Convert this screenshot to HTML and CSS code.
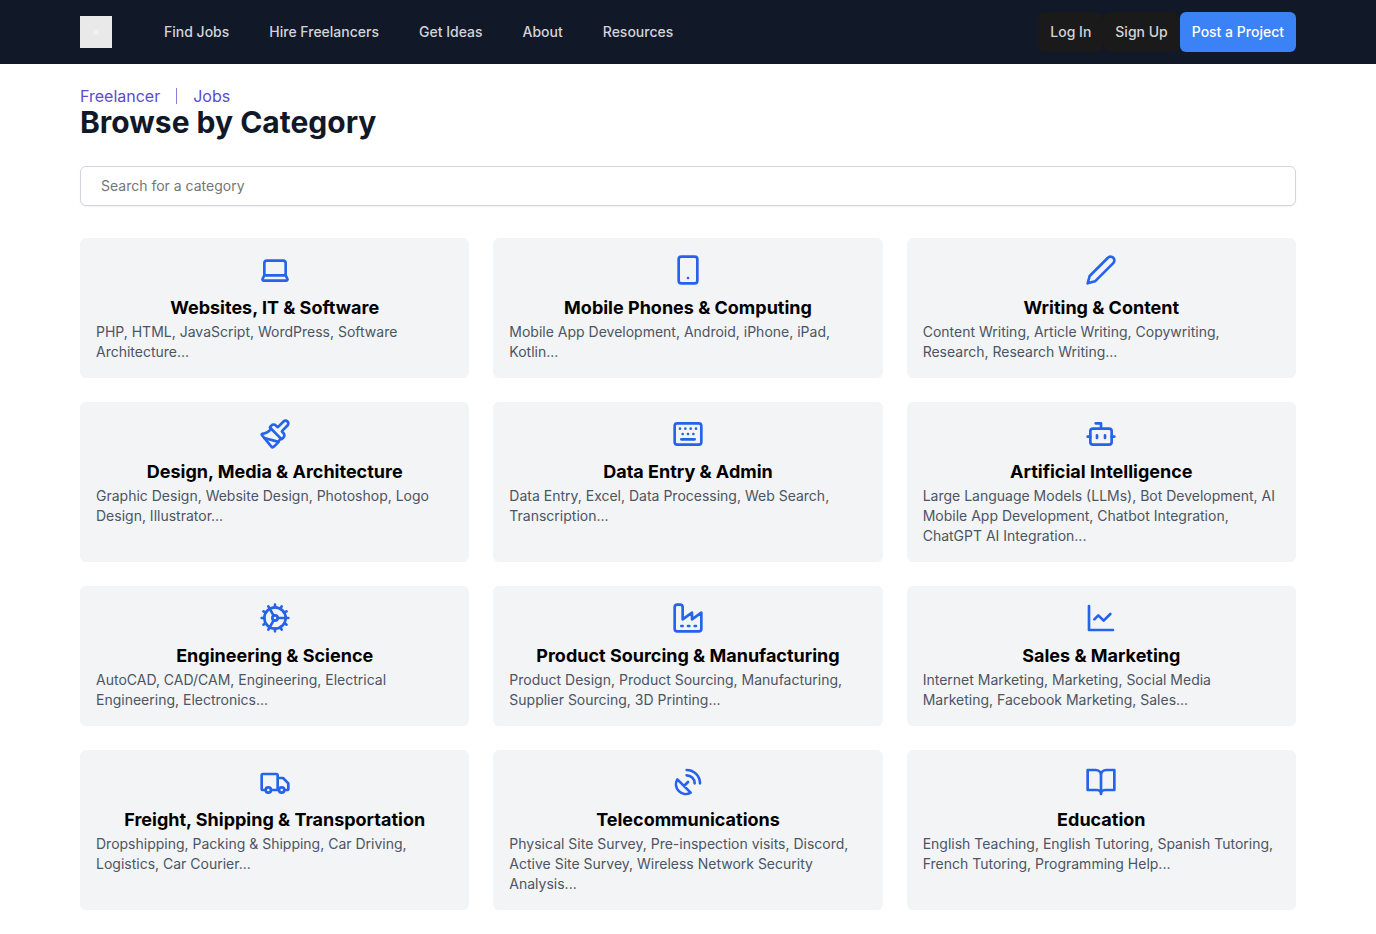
FILE: index.html
```html
<!DOCTYPE html>
<html lang="en">
<head>
<meta charset="utf-8">
<meta name="viewport" content="width=device-width, initial-scale=1">
<title>Browse by Category</title>
<link rel="stylesheet" href="styles.css">
</head>
<body>
<header class="site-header">
  <div class="container header-row">
    <a class="logo" href="#" aria-label="Home"><svg viewBox="0 0 32 32" aria-hidden="true"><rect width="32" height="32" fill="#e9e9ea"/><circle cx="16" cy="16" r="2.5" fill="#f1f1f2"/></svg></a>
    <nav class="main-nav" aria-label="Main">
      <a href="#">Find Jobs</a>
      <a href="#">Hire Freelancers</a>
      <a href="#">Get Ideas</a>
      <a href="#">About</a>
      <a href="#">Resources</a>
    </nav>
    <div class="actions">
      <button class="btn" type="button">Log In</button>
      <button class="btn" type="button">Sign Up</button>
      <button class="btn btn-primary" type="button">Post a Project</button>
    </div>
  </div>
</header>
<main class="container page">
  <nav class="breadcrumb" aria-label="Breadcrumb">
    <a href="#">Freelancer</a>
    <span class="separator"></span>
    <a href="#">Jobs</a>
  </nav>
  <h1 class="title">Browse by Category</h1>
  <input class="search" type="text" placeholder="Search for a category" aria-label="Search for a category">
  <div class="grid">
    <article class="card">
      <svg class="icon" viewBox="0 0 24 24" aria-hidden="true"><path d="M20 16V7a2 2 0 0 0-2-2H6a2 2 0 0 0-2 2v9m16 0H4m16 0 1.28 2.55a1 1 0 0 1-.9 1.45H3.62a1 1 0 0 1-.9-1.45L4 16"/></svg>
      <h2>Websites, IT &amp; Software</h2>
      <p>PHP, HTML, JavaScript, WordPress, Software Architecture...</p>
    </article>
    <article class="card">
      <svg class="icon" viewBox="0 0 24 24" aria-hidden="true"><rect width="14" height="20" x="5" y="2" rx="2"/><path d="M12 18h.01"/></svg>
      <h2>Mobile Phones &amp; Computing</h2>
      <p>Mobile App Development, Android, iPhone, iPad, Kotlin...</p>
    </article>
    <article class="card">
      <svg class="icon" viewBox="0 0 24 24" aria-hidden="true"><path d="M17 3a2.85 2.83 0 1 1 4 4L7.500 20.500 2 22l1.500-5.500Z"/></svg>
      <h2>Writing &amp; Content</h2>
      <p>Content Writing, Article Writing, Copywriting, Research, Research Writing...</p>
    </article>
    <article class="card">
      <svg class="icon" viewBox="0 0 24 24" aria-hidden="true"><path d="m14.622 17.897-10.680-2.913"/><path d="M18.376 2.622a1 1 0 1 1 3.002 3.002L17.360 9.643a.5.5 0 0 0 0 .707l.944.944a2.410 2.410 0 0 1 0 3.408l-.944.944a.5.5 0 0 1-.707 0L8.354 7.348a.5.5 0 0 1 0-.707l.944-.944a2.410 2.410 0 0 1 3.408 0l.944.944a.5.5 0 0 0 .707 0z"/><path d="M9 8c-1.804 2.710-3.970 3.460-6.583 3.948a.507.507 0 0 0-.302.819l7.320 8.883a1 1 0 0 0 1.185.204C12.735 20.405 16 16.792 16 15"/></svg>
      <h2>Design, Media &amp; Architecture</h2>
      <p>Graphic Design, Website Design, Photoshop, Logo Design, Illustrator...</p>
    </article>
    <article class="card">
      <svg class="icon" viewBox="0 0 24 24" aria-hidden="true"><path d="M10 8h.01M12 12h.01M14 8h.01M16 12h.01M18 8h.01M6 8h.01M7 16h10M8 12h.01"/><rect width="20" height="16" x="2" y="4" rx="2"/></svg>
      <h2>Data Entry &amp; Admin</h2>
      <p>Data Entry, Excel, Data Processing, Web Search, Transcription...</p>
    </article>
    <article class="card">
      <svg class="icon" viewBox="0 0 24 24" aria-hidden="true"><path d="M12 8V4H8"/><rect width="16" height="12" x="4" y="8" rx="2"/><path d="M2 14h2M20 14h2M15 13v2M9 13v2"/></svg>
      <h2>Artificial Intelligence</h2>
      <p>Large Language Models (LLMs), Bot Development, AI Mobile App Development, Chatbot Integration, ChatGPT AI Integration...</p>
    </article>
    <article class="card">
      <svg class="icon" viewBox="0 0 24 24" aria-hidden="true"><circle cx="12" cy="12" r="8"/><circle cx="12" cy="12" r="2"/><path d="M12 2v2M12 22v-2M17 20.660l-1-1.730M11 10.270 7 3.340M20.660 17l-1.730-1M3.340 7l1.730 1M14 12h8M2 12h2M20.660 7l-1.730 1M3.340 17l1.730-1M17 3.340l-1 1.730M11 13.730l-4 6.930"/></svg>
      <h2>Engineering &amp; Science</h2>
      <p>AutoCAD, CAD/CAM, Engineering, Electrical Engineering, Electronics...</p>
    </article>
    <article class="card">
      <svg class="icon" viewBox="0 0 24 24" aria-hidden="true"><path d="M2 20a2 2 0 0 0 2 2h16a2 2 0 0 0 2-2V8l-7 5V8l-7 5V4a2 2 0 0 0-2-2H4a2 2 0 0 0-2 2ZM17 18h1M12 18h1M7 18h1"/></svg>
      <h2>Product Sourcing &amp; Manufacturing</h2>
      <p>Product Design, Product Sourcing, Manufacturing, Supplier Sourcing, 3D Printing...</p>
    </article>
    <article class="card">
      <svg class="icon" viewBox="0 0 24 24" aria-hidden="true"><path d="M3 3v18h18M19 9l-5 5-4-4-3 3"/></svg>
      <h2>Sales &amp; Marketing</h2>
      <p>Internet Marketing, Marketing, Social Media Marketing, Facebook Marketing, Sales...</p>
    </article>
    <article class="card">
      <svg class="icon" viewBox="0 0 24 24" aria-hidden="true"><path d="M5 18H3c-.6 0-1-.4-1-1V7c0-.6.4-1 1-1h10c.6 0 1 .4 1 1v11M14 9h4l4 4v4c0 .6-.4 1-1 1h-2M15 18H9"/><circle cx="17" cy="18" r="2"/><circle cx="7" cy="18" r="2"/></svg>
      <h2>Freight, Shipping &amp; Transportation</h2>
      <p>Dropshipping, Packing &amp; Shipping, Car Driving, Logistics, Car Courier...</p>
    </article>
    <article class="card">
      <svg class="icon" viewBox="0 0 24 24" aria-hidden="true"><path d="M4 10a7.310 7.310 0 0 0 10 10ZM9 15l3-3M17 13a6 6 0 0 0-6-6M21 13A10 10 0 0 0 11 3"/></svg>
      <h2>Telecommunications</h2>
      <p>Physical Site Survey, Pre-inspection visits, Discord, Active Site Survey, Wireless Network Security Analysis...</p>
    </article>
    <article class="card">
      <svg class="icon" viewBox="0 0 24 24" aria-hidden="true"><path d="M2 3h6a4 4 0 0 1 4 4v14a3 3 0 0 0-3-3H2zM22 3h-6a4 4 0 0 0-4 4v14a3 3 0 0 1 3-3h7z"/></svg>
      <h2>Education</h2>
      <p>English Teaching, English Tutoring, Spanish Tutoring, French Tutoring, Programming Help...</p>
    </article>
  </div>
</main>
</body>
</html>
```
FILE: styles.css
```css
*, *::before, *::after { box-sizing: border-box; }
body {
  margin: 0;
  background: #fff;
  color: #000;
  font-family: Inter, "Liberation Sans", sans-serif;
  font-size: 14px;
  line-height: 20px;
}
h1, h2, p { margin: 0; }
a { text-decoration: none; }
.container {
  max-width: 1280px;
  margin: 0 auto;
  padding: 0 32px;
}
.site-header { background: #111827; }
.header-row {
  display: flex;
  align-items: center;
  min-height: 64px;
}
.logo, .logo svg {
  display: block;
  width: 32px;
  height: 32px;
}
.main-nav {
  display: flex;
  gap: 40px;
  margin-left: 52px;
}
.main-nav a {
  color: #d1d5db;
  font-weight: 500;
}
.actions {
  display: flex;
  margin-left: auto;
}
.btn {
  padding: 10px 12px;
  border: 0;
  border-radius: 8px;
  background: #1a1a1a;
  color: #d1d5db;
  font: inherit;
  font-weight: 500;
}
.btn-primary {
  border-radius: 6px;
  background: #3b82f6;
  color: #fff;
}
.page { padding-top: 24px; padding-bottom: 24px; }
.breadcrumb {
  display: flex;
  gap: 16px;
  font-size: 16px;
  line-height: 16px;
}
.breadcrumb a { color: #5b4bcf; }
.separator {
  width: 1px;
  background: #8782d8;
}
.title {
  color: #111827;
  font-size: 30px;
  font-weight: 700;
  line-height: 36px;
}
.search {
  display: block;
  width: 100%;
  height: 40px;
  margin: 26px 0 32px;
  padding: 8px 20px 10px;
  border: 1px solid #d1d5db;
  border-radius: 6px;
  background: #fff;
  box-shadow: 0 1px 2px rgba(0, 0, 0, 0.05);
  color: #111827;
  font: inherit;
}
.search::placeholder { color: #757575; opacity: 1; }
.grid {
  display: grid;
  grid-template-columns: repeat(3, 1fr);
  gap: 24px;
}
.card {
  padding: 16px;
  border-radius: 6px;
  background: #f3f4f6;
}
.icon {
  display: block;
  width: 32px;
  height: 32px;
  margin: 0 auto 8px;
  fill: none;
  stroke: #2563eb;
  stroke-width: 2;
  stroke-linecap: round;
  stroke-linejoin: round;
}
.card h2 {
  font-size: 18px;
  font-weight: 700;
  line-height: 28px;
  text-align: center;
}
.card p { color: #4b5563; }
```
